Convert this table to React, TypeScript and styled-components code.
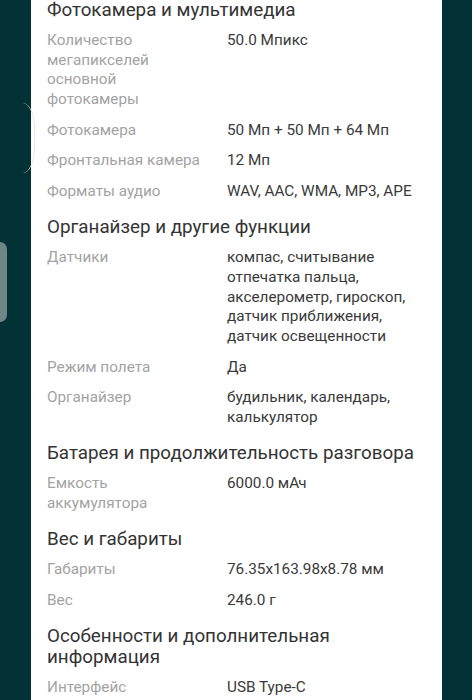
import React from "react";
import styled, { createGlobalStyle } from "styled-components";

const Global = createGlobalStyle`
  html, body { margin: 0; padding: 0; background: #023136; }
  body { font-family: Roboto, "Noto Sans", Arial, sans-serif; -webkit-font-smoothing: antialiased; }
`;

const Screen = styled.div`
  position: relative;
  width: 472px;
  height: 700px;
  overflow: hidden;
  background: #023136;
`;

const Panel = styled.div`
  margin-left: 31px;
  width: 411px;
  min-height: 700px;
  background: #ffffff;
  box-sizing: border-box;
  padding: 0 14px 0 16px;
`;

const Section = styled.section`
  display: flex;
  flex-direction: column;
`;

const Heading = styled.h2<{ $first?: boolean }>`
  margin: ${(p) => (p.$first ? "0" : "10px")} 0 4px 0;
  font-size: 18.8px;
  line-height: 21.5px;
  font-weight: 400;
  color: #333333;
`;

const Row = styled.div`
  display: grid;
  grid-template-columns: 160px 1fr;
  column-gap: 20px;
  padding: 5.4px 0;
  font-size: 15.3px;
  line-height: 19.8px;
`;

const Label = styled.div`
  color: #a3a3a3;
`;

const Value = styled.div`
  color: #3a3a3a;
`;

const EdgeTab = styled.div`
  position: absolute;
  left: 0;
  top: 242px;
  width: 7px;
  height: 80px;
  background: #6f8687;
  border-radius: 0 7px 7px 0;
`;

const EdgeArc = styled.div`
  position: absolute;
  left: 23px;
  top: 103px;
  width: 12px;
  height: 70px;
  box-sizing: border-box;
  border-right: 1.5px solid #e6e6e6;
  border-radius: 0 14px 14px 0 / 0 30px 30px 0;
`;

type Spec = { label: string; value: string };
type Group = { title: string; rows: Spec[] };

const groups: Group[] = [
  {
    title: "Фотокамера и мультимедиа",
    rows: [
      { label: "Количество мегапикселей основной фотокамеры", value: "50.0 Мпикс" },
      { label: "Фотокамера", value: "50 Мп + 50 Мп + 64 Мп" },
      { label: "Фронтальная камера", value: "12 Мп" },
      { label: "Форматы аудио", value: "WAV, AAC, WMA, MP3, APE" },
    ],
  },
  {
    title: "Органайзер и другие функции",
    rows: [
      {
        label: "Датчики",
        value:
          "компас, считывание отпечатка пальца, акселерометр, гироскоп, датчик приближения, датчик освещенности",
      },
      { label: "Режим полета", value: "Да" },
      { label: "Органайзер", value: "будильник, календарь, калькулятор" },
    ],
  },
  {
    title: "Батарея и продолжительность разговора",
    rows: [{ label: "Емкость аккумулятора", value: "6000.0 мАч" }],
  },
  {
    title: "Вес и габариты",
    rows: [
      { label: "Габариты", value: "76.35x163.98x8.78 мм" },
      { label: "Вес", value: "246.0 г" },
    ],
  },
  {
    title: "Особенности и дополнительная информация",
    rows: [{ label: "Интерфейс", value: "USB Type-C" }],
  },
];

export default function App() {
  return (
    <>
      <Global />
      <Screen>
        <Panel>
          {groups.map((g, i) => (
            <Section key={g.title}>
              <Heading $first={i === 0}>{g.title}</Heading>
              {g.rows.map((r) => (
                <Row key={r.label}>
                  <Label>{r.label}</Label>
                  <Value>{r.value}</Value>
                </Row>
              ))}
            </Section>
          ))}
        </Panel>
        <EdgeArc />
        <EdgeTab />
      </Screen>
    </>
  );
}
